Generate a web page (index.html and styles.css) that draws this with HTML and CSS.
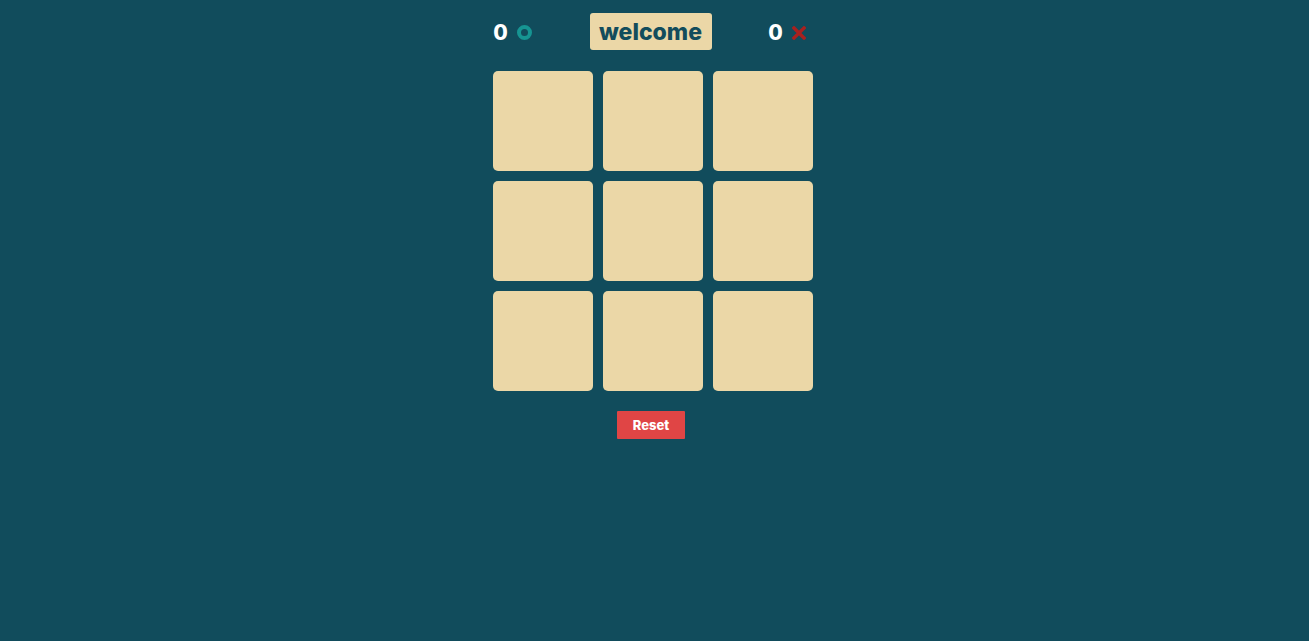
FILE: index.html
```html
<!DOCTYPE html>
<html>
<head>
<meta charset="utf-8">
<link rel="stylesheet" href="styles.css">
</head>
<body>
<main class="game">
  <header class="header">
    <div class="score">
      <span class="score-num">0</span>
      <span class="mark-o"></span>
    </div>
    <div class="status">welcome</div>
    <div class="score">
      <span class="score-num">0</span>
      <svg class="mark-x" width="14" height="14" viewBox="0 0 14 14"><path d="M2 2 L12 12 M12 2 L2 12" stroke="#a8211f" stroke-width="3.4" stroke-linecap="square"/></svg>
    </div>
  </header>
  <section class="board">
    <div class="cell"></div><div class="cell"></div><div class="cell"></div>
    <div class="cell"></div><div class="cell"></div><div class="cell"></div>
    <div class="cell"></div><div class="cell"></div><div class="cell"></div>
  </section>
  <div class="actions">
    <button class="reset">Reset</button>
  </div>
</main>
</body>
</html>
```
FILE: styles.css
```css
html, body {
  margin: 0;
  padding: 0;
  background: #114c5c;
  height: 100%;
}
body {
  font-family: Inter, "Open Sans", sans-serif;
}
.game {
  width: 320px;
  margin-left: calc(50% - 161.5px);
  padding-top: 13px;
  display: flex;
  flex-direction: column;
}
.header {
  width: 313px;
  display: flex;
  justify-content: space-between;
  align-items: center;
  height: 37px;
}
.score {
  display: flex;
  align-items: center;
  gap: 9px;
  padding-top: 2px;
}
.score-num {
  color: #ffffff;
  font-weight: 800;
  font-size: 21px;
  line-height: 1;
  width: 15px;
  text-align: center;
}
.mark-o {
  box-sizing: border-box;
  width: 15px;
  height: 15px;
  border: 4px solid #169492;
  border-radius: 50%;
}
.mark-x {
  display: block;
}
.status {
  margin-left: 1px;
  background: #ebd7a7;
  color: #124c5c;
  font-weight: 800;
  font-size: 23px;
  width: 122px;
  height: 37px;
  display: flex;
  align-items: center;
  justify-content: center;
  border-radius: 3px;
}
.board {
  margin-top: 21px;
  display: grid;
  grid-template-columns: repeat(3, 100px);
  grid-auto-rows: 100px;
  gap: 10px;
}
.cell {
  background: #ebd7a7;
  border-radius: 5px;
}
.actions {
  display: flex;
  justify-content: center;
  padding-top: 20px;
  padding-right: 4px;
}
.reset {
  width: 68px;
  height: 28px;
  background: #e04545;
  color: #fff;
  border: none;
  border-radius: 1px;
  font-family: Inter, sans-serif;
  font-weight: 800;
  font-size: 13px;
  padding: 0;
}
```
